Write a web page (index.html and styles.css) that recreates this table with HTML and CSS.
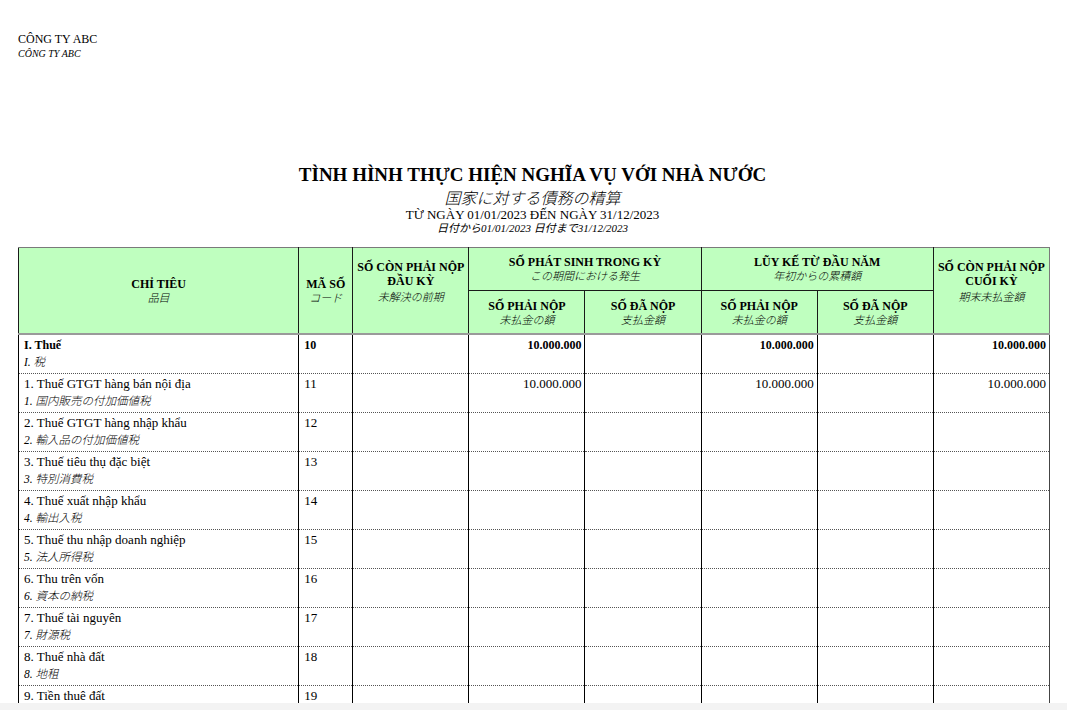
FILE: index.html
```html
<!DOCTYPE html>
<html lang="vi">
<head>
<meta charset="utf-8">
<title>Tình hình thực hiện nghĩa vụ với nhà nước</title>
<link rel="stylesheet" href="styles.css">
</head>
<body>
<div class="page">
  <div class="company">
    <div class="company-name">CÔNG TY ABC</div>
    <div class="company-name-jp">CÔNG TY ABC</div>
  </div>

  <div class="title-block">
    <div class="title">TÌNH HÌNH THỰC HIỆN NGHĨA VỤ VỚI NHÀ NƯỚC</div>
    <div class="title-jp">国家に対する債務の精算</div>
    <div class="period">TỪ NGÀY 01/01/2023 ĐẾN NGÀY 31/12/2023</div>
    <div class="period-jp">日付から01/01/2023 日付まで31/12/2023</div>
  </div>

  <table class="report">
    <colgroup>
      <col class="c-name"><col class="c-code"><col class="c-num"><col class="c-num"><col class="c-num"><col class="c-num"><col class="c-num"><col class="c-num">
    </colgroup>
    <thead>
      <tr class="h1">
        <th rowspan="2" class="mid"><span class="hv">CHỈ TIÊU</span><span class="hj">品目</span></th>
        <th rowspan="2" class="mid"><span class="hv">MÃ SỐ</span><span class="hj">コード</span></th>
        <th rowspan="2" class="top"><span class="hv">SỐ CÒN PHẢI NỘP ĐẦU KỲ</span><span class="hj">未解決の前期</span></th>
        <th colspan="2"><span class="hv">SỐ PHÁT SINH TRONG KỲ</span><span class="hj">この期間における発生</span></th>
        <th colspan="2"><span class="hv">LŨY KẾ TỪ ĐẦU NĂM</span><span class="hj">年初からの累積額</span></th>
        <th rowspan="2" class="top"><span class="hv">SỐ CÒN PHẢI NỘP CUỐI KỲ</span><span class="hj">期末未払金額</span></th>
      </tr>
      <tr class="h2">
        <th><span class="hv">SỐ PHẢI NỘP</span><span class="hj">未払金の額</span></th>
        <th><span class="hv">SỐ ĐÃ NỘP</span><span class="hj">支払金額</span></th>
        <th><span class="hv">SỐ PHẢI NỘP</span><span class="hj">未払金の額</span></th>
        <th><span class="hv">SỐ ĐÃ NỘP</span><span class="hj">支払金額</span></th>
      </tr>
    </thead>
    <tbody>
      <tr class="group">
        <td><span class="nv">I. Thuế</span><span class="nj">I. 税</span></td>
        <td>10</td><td></td><td class="num">10.000.000</td><td></td><td class="num">10.000.000</td><td></td><td class="num">10.000.000</td>
      </tr>
      <tr>
        <td><span class="nv">1. Thuế GTGT hàng bán nội địa</span><span class="nj">1. 国内販売の付加価値税</span></td>
        <td>11</td><td></td><td class="num">10.000.000</td><td></td><td class="num">10.000.000</td><td></td><td class="num">10.000.000</td>
      </tr>
      <tr>
        <td><span class="nv">2. Thuế GTGT hàng nhập khẩu</span><span class="nj">2. 輸入品の付加価値税</span></td>
        <td>12</td><td></td><td></td><td></td><td></td><td></td><td></td>
      </tr>
      <tr>
        <td><span class="nv">3. Thuế tiêu thụ đặc biệt</span><span class="nj">3. 特別消費税</span></td>
        <td>13</td><td></td><td></td><td></td><td></td><td></td><td></td>
      </tr>
      <tr>
        <td><span class="nv">4. Thuế xuất nhập khẩu</span><span class="nj">4. 輸出入税</span></td>
        <td>14</td><td></td><td></td><td></td><td></td><td></td><td></td>
      </tr>
      <tr>
        <td><span class="nv">5. Thuế thu nhập doanh nghiệp</span><span class="nj">5. 法人所得税</span></td>
        <td>15</td><td></td><td></td><td></td><td></td><td></td><td></td>
      </tr>
      <tr>
        <td><span class="nv">6. Thu trên vốn</span><span class="nj">6. 資本の納税</span></td>
        <td>16</td><td></td><td></td><td></td><td></td><td></td><td></td>
      </tr>
      <tr>
        <td><span class="nv">7. Thuế tài nguyên</span><span class="nj">7. 財源税</span></td>
        <td>17</td><td></td><td></td><td></td><td></td><td></td><td></td>
      </tr>
      <tr>
        <td><span class="nv">8. Thuế nhà đất</span><span class="nj">8. 地租</span></td>
        <td>18</td><td></td><td></td><td></td><td></td><td></td><td></td>
      </tr>
      <tr class="last">
        <td><span class="nv">9. Tiền thuê đất</span></td>
        <td>19</td><td></td><td></td><td></td><td></td><td></td><td></td>
      </tr>
    </tbody>
  </table>
</div>
</body>
</html>
```
FILE: styles.css
```css
html {
  background: #f3f3f3;
}
body {
  margin: 0;
  font-family: "Liberation Serif", "Noto Sans CJK JP", serif;
  color: #000;
}
.page {
  background: #fff;
  height: 703px;
  overflow: hidden;
  padding: 32px 18px 0 18px;
  box-sizing: border-box;
}
.company-name {
  font-size: 12px;
  line-height: 14px;
}
.company-name-jp {
  font-size: 10px;
  line-height: 12px;
  font-style: italic;
  margin-top: 2px;
}
.title-block {
  margin-top: 105px;
  text-align: center;
  padding-right: 2px;
}
.title {
  font-size: 19px;
  font-weight: bold;
  line-height: 20px;
}
.title-jp {
  font-size: 16px;
  line-height: 18px;
  margin-top: 3px;
  font-style: italic;
  font-family: "Noto Sans CJK JP", sans-serif;
  font-weight: 300;
}
.period {
  font-size: 13px;
  line-height: 15px;
  margin-top: 1px;
}
.period-jp {
  font-size: 11px;
  line-height: 13px;
  font-style: italic;
}
.report {
  margin-top: 12px;
  border-collapse: collapse;
  table-layout: fixed;
  width: 1032px;
  border: 1px solid #7a7a7a;
}
.c-name { width: 280px; }
.c-code { width: 54px; }
.c-num { width: 116px; }

.report th {
  background: #bfffbf;
  border: 1px solid #1a1a1a;
  border-top-color: #7a7a7a;
  text-align: center;
  font-weight: normal;
  padding: 3px 3px;
  vertical-align: middle;
}
.report thead tr.h1 th { height: 36px; }
.report thead tr.h2 th { height: 34px; padding-top: 5px; }
.report thead th.top { vertical-align: top; padding-top: 12px; }
.report thead th.top .hj { margin-top: 2px; }
.report thead tr.h1 th:last-child { border-right-color: #7a7a7a; }
.report thead tr.h2 th { border-bottom: 2px solid #9a9a9a; }
.report thead tr.h1 th[rowspan] { border-bottom: 2px solid #9a9a9a; }

.hv {
  display: block;
  font-weight: bold;
  font-size: 12px;
  line-height: 14px;
}
.hj {
  display: block;
  font-style: italic;
  font-size: 11px;
  line-height: 14px;
  font-weight: 300;
}

.report td {
  border-left: 1px solid #000;
  border-right: 1px solid #000;
  border-bottom: 1px dotted #555;
  height: 32px;
  vertical-align: top;
  padding: 2px 4px 4px 5px;
  font-size: 13px;
  line-height: 16px;
}
.report td:last-child { border-right-color: #444; }
.report td.num { text-align: right; padding-right: 3px; }
.report tr.group td { font-weight: bold; font-size: 12px; }

.nv { display: block; }
.nj {
  display: block;
  font-style: italic;
  font-weight: 300;
  font-size: 11.5px;
  line-height: 14px;
  margin-top: 2px;
}
.report tr.last td { height: 14px; }
```
